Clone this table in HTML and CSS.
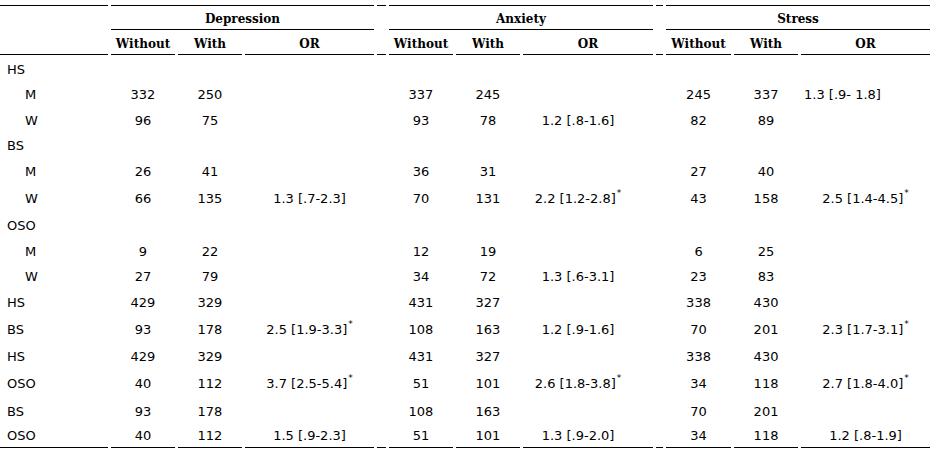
FILE: index.html
```html
<!DOCTYPE html>
<html>
<head>
<meta charset="utf-8">
<link rel="stylesheet" href="styles.css">
</head>
<body>
<table class="tbl">
  <colgroup>
    <col class="c-label">
    <col class="c-n"><col class="c-n"><col class="c-or">
    <col class="c-sp1">
    <col class="c-n"><col class="c-n"><col class="c-or2">
    <col class="c-sp2">
    <col class="c-n3"><col class="c-n"><col class="c-or">
  </colgroup>
  <thead>
    <tr class="h1">
      <th class="edge" rowspan="2"></th>
      <th class="grp" colspan="3">Depression</th>
      <th class="edge" rowspan="2"></th>
      <th class="grp" colspan="3">Anxiety</th>
      <th class="edge" rowspan="2"></th>
      <th class="grp" colspan="3">Stress</th>
    </tr>
    <tr class="h2">
      <th class="sub">Without</th><th class="sub">With</th><th class="sub">OR</th>
      <th class="sub">Without</th><th class="sub">With</th><th class="sub">OR</th>
      <th class="sub">Without</th><th class="sub">With</th><th class="sub">OR</th>
    </tr>
  </thead>
  <tbody>
    <tr class="r"><td class="lbl">HS</td><td></td><td></td><td></td><td></td><td></td><td></td><td></td><td></td><td></td><td></td><td></td></tr>
    <tr class="r"><td class="lbl ind">M</td><td>332</td><td>250</td><td></td><td></td><td>337</td><td>245</td><td class="aor"></td><td></td><td>245</td><td>337</td><td class="left">1.3 [.9- 1.8]</td></tr>
    <tr class="r"><td class="lbl ind">W</td><td>96</td><td>75</td><td></td><td></td><td>93</td><td>78</td><td class="aor">1.2 [.8-1.6]</td><td></td><td>82</td><td>89</td><td></td></tr>
    <tr class="r"><td class="lbl">BS</td><td></td><td></td><td></td><td></td><td></td><td></td><td class="aor"></td><td></td><td></td><td></td><td></td></tr>
    <tr class="r"><td class="lbl ind">M</td><td>26</td><td>41</td><td></td><td></td><td>36</td><td>31</td><td class="aor"></td><td></td><td>27</td><td>40</td><td></td></tr>
    <tr class="rs"><td class="lbl ind">W</td><td>66</td><td>135</td><td>1.3 [.7-2.3]</td><td></td><td>70</td><td>131</td><td class="aor">2.2 [1.2-2.8]<sup class="st">*</sup></td><td></td><td>43</td><td>158</td><td>2.5 [1.4-4.5]<sup class="st">*</sup></td></tr>
    <tr class="r"><td class="lbl">OSO</td><td></td><td></td><td></td><td></td><td></td><td></td><td class="aor"></td><td></td><td></td><td></td><td></td></tr>
    <tr class="r"><td class="lbl ind">M</td><td>9</td><td>22</td><td></td><td></td><td>12</td><td>19</td><td class="aor"></td><td></td><td>6</td><td>25</td><td></td></tr>
    <tr class="r"><td class="lbl ind">W</td><td>27</td><td>79</td><td></td><td></td><td>34</td><td>72</td><td class="aor">1.3 [.6-3.1]</td><td></td><td>23</td><td>83</td><td></td></tr>
    <tr class="r"><td class="lbl">HS</td><td>429</td><td>329</td><td></td><td></td><td>431</td><td>327</td><td class="aor"></td><td></td><td>338</td><td>430</td><td></td></tr>
    <tr class="rs"><td class="lbl">BS</td><td>93</td><td>178</td><td>2.5 [1.9-3.3]<sup class="st">*</sup></td><td></td><td>108</td><td>163</td><td class="aor">1.2 [.9-1.6]</td><td></td><td>70</td><td>201</td><td>2.3 [1.7-3.1]<sup class="st">*</sup></td></tr>
    <tr class="r"><td class="lbl">HS</td><td>429</td><td>329</td><td></td><td></td><td>431</td><td>327</td><td class="aor"></td><td></td><td>338</td><td>430</td><td></td></tr>
    <tr class="rs"><td class="lbl">OSO</td><td>40</td><td>112</td><td>3.7 [2.5-5.4]<sup class="st">*</sup></td><td></td><td>51</td><td>101</td><td class="aor">2.6 [1.8-3.8]<sup class="st">*</sup></td><td></td><td>34</td><td>118</td><td>2.7 [1.8-4.0]<sup class="st">*</sup></td></tr>
    <tr class="r"><td class="lbl">BS</td><td>93</td><td>178</td><td></td><td></td><td>108</td><td>163</td><td class="aor"></td><td></td><td>70</td><td>201</td><td></td></tr>
    <tr class="r last"><td class="lbl">OSO</td><td>40</td><td>112</td><td>1.5 [.9-2.3]</td><td></td><td>51</td><td>101</td><td class="aor">1.3 [.9-2.0]</td><td></td><td>34</td><td>118</td><td>1.2 [.8-1.9]</td></tr>
  </tbody>
</table>
</body>
</html>
```
FILE: styles.css
```css
html, body {
  margin: 0;
  padding: 0;
  background: #fff;
}

.tbl {
  table-layout: fixed;
  border-collapse: separate;
  border-spacing: 3px 0;
  width: 936px;
  margin: 5px 0 0 -3px;
  font-family: "DejaVu Sans", Verdana, sans-serif;
  font-size: 13px;
  color: #000;
}

.c-label { width: 108px; }
.c-n { width: 64px; }
.c-n3 { width: 65px; }
.c-or { width: 129px; }
.c-or2 { width: 130px; }
.c-sp1 { width: 9px; }
.c-sp2 { width: 7px; }

.tbl th {
  font-family: "DejaVu Serif", "Liberation Serif", serif;
  font-weight: bold;
  font-size: 12px;
  line-height: 15px;
  text-align: center;
  vertical-align: bottom;
  padding: 0 0 2px 0;
  white-space: nowrap;
}

.h1 { height: 25px; }
.h2 { height: 25px; }

.edge {
  border-top: 1px solid #000;
  border-bottom: 1px solid #000;
}

.grp {
  border-top: 1px solid #000;
  border-bottom: 1px solid #000;
}

.sub {
  border-bottom: 1px solid #000;
}

.tbl td {
  padding: 0 0 4px 0;
  line-height: 15px;
  text-align: center;
  vertical-align: bottom;
  white-space: nowrap;
}

.r { height: 25.6px; }
.rs { height: 28.7px; }

.rs td {
  padding-bottom: 5.6px;
}

.tbl td.lbl {
  text-align: left;
  padding-left: 7px;
}

.tbl td.ind {
  padding-left: 25px;
}

.tbl td.left {
  text-align: left;
  padding-left: 3px;
}

.tbl td.aor {
  padding-right: 20px;
}

.last td {
  border-bottom: 1px solid #000;
}

.st {
  font-size: 9px;
  line-height: 0;
  vertical-align: 7px;
  margin-left: 1px;
}
```
